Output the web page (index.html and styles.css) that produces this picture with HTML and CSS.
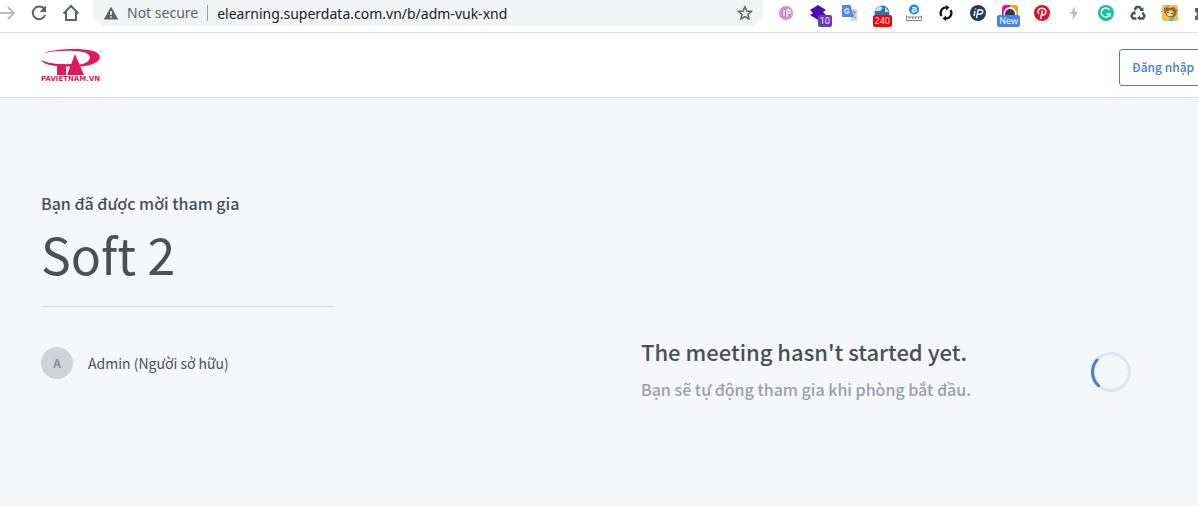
FILE: index.html
```html
<!DOCTYPE html>
<html lang="vi">
<head>
    <meta charset="UTF-8">
    <meta name="viewport" content="width=device-width, initial-scale=1.0">
    <title>Soft 2</title>
    <link rel="stylesheet" href="styles.css">
</head>
<body>
    <div class="toolbar">
        <div class="nav-buttons">
            <button class="icon-btn" aria-label="Forward">
                <svg width="20" height="20" viewBox="0 0 20 20" fill="none" stroke="#babcbe" stroke-width="2"><path d="M2 10h15M11 4l6 6-6 6"/></svg>
            </button>
            <button class="icon-btn" aria-label="Reload">
                <svg width="20" height="20" viewBox="0 0 20 20"><path d="M15.5 6.2A6.4 6.4 0 1 0 16.2 12" fill="none" stroke="#5f6368" stroke-width="2"/><path d="M17 2.5v6.4h-6.4z" fill="#5f6368"/></svg>
            </button>
            <button class="icon-btn" aria-label="Home">
                <svg width="20" height="20" viewBox="0 0 20 20" fill="none" stroke="#5f6368" stroke-width="2"><path d="M2.5 10.5L10 3l7.5 7.5M5 9v8h10V9"/></svg>
            </button>
        </div>
        <div class="address-bar">
            <svg width="16" height="16" viewBox="0 0 16 16"><path d="M8 1.5L15.3 14.5H.7z" fill="#5f6368"/><path d="M7.2 6h1.6v4H7.2zM7.2 11.2h1.6v1.6H7.2z" fill="#f1f3f4"/></svg>
            <label class="security" for="url">Not secure</label>
            <input class="url" id="url" type="text" value="elearning.superdata.com.vn/b/adm-vuk-xnd">
            <button class="icon-btn star" aria-label="Bookmark">
                <svg width="16" height="16" viewBox="0 0 16 16" fill="none" stroke="#5f6368" stroke-width="1.5"><path d="M8 1.8l1.8 4.2 4.6.4-3.5 3 1.1 4.5L8 11.5l-4 2.4 1.1-4.5-3.5-3 4.6-.4z"/></svg>
            </button>
        </div>
        <div class="extensions">
            <button class="icon-btn" aria-label="IP lookup">
                <svg width="16" height="16" viewBox="0 0 16 16"><circle cx="8" cy="8" r="7" fill="#c77fb8"/><circle cx="8" cy="8" r="5.6" fill="none" stroke="#e3b9dc" stroke-width="2" stroke-dasharray="1 1"/><path d="M6 5v6M9 12V5h1.500a1.700 1.700 0 0 1 0 3.500H9" fill="none" stroke="#fff" stroke-width="1.300"/></svg>
            </button>
            <button class="icon-btn" aria-label="Layers">
                <svg width="18" height="16" viewBox="0 0 18 16"><path d="M9 0l8 5-3 2 3 3-8 5-8-5 3-2-3-3z" fill="#4a0fb0"/></svg>
                <span class="badge purple">10</span>
            </button>
            <button class="icon-btn" aria-label="Translate">
                <svg width="16" height="16" viewBox="0 0 16 16"><path d="M6 4h9.500v12H9z" fill="#d4d8dc"/><path d="M9 7h5M11.500 6v1M13 7c-.5 3-2 4-3.500 5M10 9c1 2 2 3 4 4" stroke="#7d98aa" fill="none"/><path d="M0 0h8.500l3 12H0z" fill="#4a8bf0"/><path d="M6.800 4.800A2.200 2.200 0 1 0 7 7H5" fill="none" stroke="#fff" stroke-width="1.200"/></svg>
            </button>
            <button class="icon-btn" aria-label="Page rank">
                <svg width="16" height="16" viewBox="0 0 16 16"><circle cx="8" cy="8" r="7.500" fill="#2374ad"/><path d="M1 6q2-4 5-5l3 2-3 3zM11 2l4 5h-4z" fill="#c6e6f6"/></svg>
                <span class="badge wide red">240</span>
            </button>
            <button class="icon-btn" aria-label="Ruler">
                <svg width="18" height="18" viewBox="0 0 18 18"><circle cx="9" cy="5.500" r="5" fill="#1685f1"/><path d="M7 4q3-1.500 4 .5V8M11 5.500Q7 5 7 7q1.500 2 4 0" fill="none" stroke="#fff" stroke-width="1.300"/><path d="M1.500 11.500v5h15v-5M1.500 13h15M4.500 13v2M7.500 13v2M10.500 13v2M13.500 13v2" fill="none" stroke="#888"/></svg>
            </button>
            <button class="icon-btn" aria-label="Sync">
                <svg width="16" height="16" viewBox="0 0 16 16"><path d="M8.500 2.500A5.500 5.500 0 0 0 3.500 11M7.500 13.500A5.500 5.500 0 0 0 12.500 5" fill="none" stroke="#111" stroke-width="2.200"/><path d="M8 0l3.500 2.500L8 5.500zM8 10.500l-3.500 3L8 16z" fill="#111"/></svg>
            </button>
            <button class="icon-btn" aria-label="IP address">
                <svg width="16" height="16" viewBox="0 0 16 16"><circle cx="8" cy="8" r="8" fill="#223a5e"/><path d="M5 6l-1 5M5.600 3.500v1M6.500 13l1.600-8h3q2.400.5 1.400 2.700Q11.500 9.500 8 9.200" fill="none" stroke="#fff" stroke-width="1.400"/></svg>
            </button>
            <button class="icon-btn" aria-label="Screen capture">
                <svg width="16" height="16" viewBox="0 0 16 16"><rect width="16" height="16" rx="4" fill="#f09"/><path d="M8 0h4q4 0 4 4v6L8 8z" fill="#ff9f10"/><circle cx="8" cy="8.500" r="6.500" fill="#fff"/><circle cx="8" cy="9" r="5" fill="#333b46"/></svg>
                <span class="badge wide blue">New</span>
            </button>
            <button class="icon-btn" aria-label="Pinterest">
                <svg width="16" height="16" viewBox="0 0 16 16"><circle cx="8" cy="8" r="8" fill="#e60f23"/><path d="M5 9C2.500 6 5 3.200 8 3.200c3.500 0 4.500 2.500 3.500 5C10.700 10.500 8.500 10.500 7.700 9M8.500 5.500L6.500 14" fill="none" stroke="#fff" stroke-width="1.500"/></svg>
            </button>
            <button class="icon-btn" aria-label="Lightning">
                <svg width="16" height="16" viewBox="0 0 16 16"><path d="M9.500 1L4 9h3.500L6 15l6-8H8.500z" fill="#b9b9b9"/></svg>
            </button>
            <button class="icon-btn" aria-label="Grammar check">
                <svg width="16" height="16" viewBox="0 0 16 16"><circle cx="8" cy="8" r="8" fill="#15c39a"/><path d="M11.500 5A4.500 4.500 0 1 0 12 9H8.500M12 9v3" fill="none" stroke="#fff" stroke-width="1.500"/></svg>
            </button>
            <button class="icon-btn" aria-label="Recycle">
                <svg width="16" height="16" viewBox="0 0 16 16"><path d="M4.500 5L6.500 2h3l2 3M12.500 7.500l2 3.500-1.500 2.500H9M6.500 13.500H3L1.500 11l2-3.500" fill="none" stroke="#4b545e" stroke-width="2.400"/><path d="M9.500 6h4V2zM10 10.500v5L7 13zM1 8l4-2 1 4z" fill="#4b545e"/></svg>
            </button>
            <button class="icon-btn" aria-label="Game">
                <svg width="16" height="16" viewBox="0 0 16 16"><rect width="16" height="16" rx="2" fill="#f2c14b"/><path d="M2 3l3-1 3 1 4-1 3 3-1 5-3 3-6-2-3-4z" fill="#a95f2b"/><path d="M4 7l5-2 3 3-2 3-4 0z" fill="#f7dfb0"/><path d="M5 7h2v1H5zM9 8h2v1H9z" fill="#6b3218"/><path d="M8 12l3 0 1 4H7zM4 0h3l-1 3zM12 4h4v2z" fill="#52c3bc"/></svg>
            </button>
            <button class="icon-btn" aria-label="Extensions">
                <svg width="16" height="16" viewBox="0 0 16 16"><path d="M1 3h4a2 2 0 0 1 4 0h4v4a2 2 0 0 1 0 4v4H1v-4a2 2 0 0 0 0-4z" fill="#5f6368"/></svg>
            </button>
        </div>
    </div>

    <header class="header">
        <div class="container header-row">
            <a href="#" class="logo" aria-label="PAVIETNAM.VN">
                <svg width="62" height="26" viewBox="0 0 62 26" fill="#df1a5c">
                    <path d="M3 4C16-1 42-1 52 2c10 3 8 10 0 13-5 2-11 2.500-16 2.500v-1.500c13-1 17-9 8-12.500C36 1 16 1 3 4z"/>
                    <path d="M0 11c8 4 20 4.500 33 4v2.500H25V26h-9v-9C8 16.500 2 14.500 0 11z"/>
                    <path d="M34 5l9 21H26z"/>
                    <circle cx="60" cy="3" r="1.300" fill="none" stroke="#f4a9c2" stroke-width=".6"/>
                </svg>
                <span class="logo-name">PAVIETNAM.VN</span>
            </a>
            <a href="#" class="btn-login">Đăng nhập</a>
        </div>
    </header>

    <main class="room">
        <div class="container room-row">
            <section class="invite">
                <h4 class="invite-label">Bạn đã được mời tham gia</h4>
                <h1 class="room-name">Soft 2</h1>
                <hr class="divider">
                <div class="owner">
                    <span class="avatar">A</span>
                    <h5 class="owner-name">Admin (Người sở hữu)</h5>
                </div>
            </section>
            <section class="waiting">
                <div class="waiting-text">
                    <h3 class="waiting-title">The meeting hasn't started yet.</h3>
                    <p class="waiting-note">Bạn sẽ tự động tham gia khi phòng bắt đầu.</p>
                </div>
                <svg class="loader" width="40" height="40" viewBox="0 0 40 40" fill="none" stroke-width="3">
                    <circle cx="20" cy="20" r="18.500" stroke="#dbe5f6"/>
                    <path d="M6 8A18.500 18.500 0 0 0 7.500 33.700" stroke="#467fcf" stroke-linecap="round"/>
                </svg>
            </section>
        </div>
    </main>
</body>
</html>
```
FILE: styles.css
```css
* {
    margin: 0;
    padding: 0;
    box-sizing: border-box;
}

body {
    font-family: "Noto Sans CJK SC", "Noto Sans", sans-serif;
    background: #f5f7fb;
    color: #495057;
    min-height: 100vh;
    overflow: hidden;
}

button {
    background: none;
    border: none;
    cursor: pointer;
}

svg {
    display: block;
}

/* Browser toolbar */
.toolbar {
    display: flex;
    height: 33px;
    padding-bottom: 6px;
    background: #fff;
    border-bottom: 1px solid #d9dce0;
    font-family: "Noto Sans", sans-serif;
}

.nav-buttons {
    display: flex;
    align-items: center;
    gap: 12px;
    width: 92px;
    margin-left: -3px;
    margin-right: 4px;
}

.address-bar {
    display: flex;
    align-items: center;
    flex: 1;
    padding: 0 10px;
    background: #f1f3f4;
    border-radius: 0 0 14px 14px;
}

.security {
    padding: 0 9px 0 8px;
    border-right: 1px solid #9aa0a6;
    color: #5f6368;
    font-size: 14px;
    line-height: 16px;
}

.url {
    flex: 1;
    padding: 0 9px;
    background: none;
    border: none;
    outline: none;
    color: #202124;
    font-family: inherit;
    font-size: 14px;
}

.extensions {
    display: flex;
    align-items: center;
    gap: 8px;
    margin-left: 11px;
    margin-right: -16px;
}

.icon-btn {
    position: relative;
    display: flex;
    align-items: center;
    justify-content: center;
    flex-shrink: 0;
}

.extensions .icon-btn {
    width: 24px;
    height: 24px;
}

.badge {
    position: absolute;
    right: -2px;
    bottom: -2px;
    padding: 0 2px;
    border-radius: 2px;
    color: #fff;
    font-family: "Open Sans", sans-serif;
    font-size: 9px;
    line-height: 12px;
}

.badge.wide {
    right: 2px;
}

.purple {
    background: #673ab7;
}

.red {
    background: #f00;
}

.blue {
    background: #4285f4;
}

/* The page is a little wider than the window */
.container {
    margin-left: 41px;
    margin-right: -19px;
}

.header {
    background: #fff;
    border-bottom: 1px solid #dfe4ea;
}

.header-row {
    display: flex;
    align-items: flex-start;
    justify-content: space-between;
    height: 64px;
    padding-top: 16px;
}

.logo {
    color: #df1a5c;
    text-decoration: none;
}

.logo-name {
    display: block;
    font-family: "DejaVu Sans", sans-serif;
    font-size: 7px;
    font-weight: 700;
    line-height: 8px;
}

.btn-login {
    width: 98px;
    height: 37px;
    padding: 0 12px;
    border: 1px solid #467fcf;
    border-radius: 3px;
    color: #467fcf;
    font-size: 12px;
    font-weight: 500;
    line-height: 34px;
    text-decoration: none;
    white-space: nowrap;
}

.room-row {
    display: grid;
    grid-template-columns: 1fr 1fr;
    gap: 24px;
    padding-top: 92px;
}

.invite-label {
    font-size: 16px;
    font-weight: 500;
    line-height: 26px;
}

.room-name {
    padding: 7px 0;
    font-size: 50px;
    font-weight: 400;
    line-height: 60px;
}

.divider {
    width: 51%;
    margin: 16px 0 40px;
    border: none;
    border-top: 1px solid #d3dce9;
}

.owner {
    display: flex;
    align-items: center;
    gap: 15px;
}

.avatar {
    width: 32px;
    height: 32px;
    border-radius: 50%;
    background: #ced4da;
    color: #868e96;
    font-size: 12px;
    font-weight: 700;
    line-height: 32px;
    text-align: center;
}

.owner-name {
    font-size: 14px;
    font-weight: 400;
}

.waiting {
    display: flex;
    align-items: center;
    justify-content: space-between;
    align-self: end;
    padding-right: 86px;
    margin-bottom: -30px;
}

.waiting-title {
    margin-bottom: 8px;
    font-size: 22px;
    font-weight: 500;
    line-height: 32px;
}

.waiting-note {
    padding-bottom: 6px;
    color: #9aa0ac;
    font-size: 16px;
    font-weight: 500;
    line-height: 28px;
}
```
